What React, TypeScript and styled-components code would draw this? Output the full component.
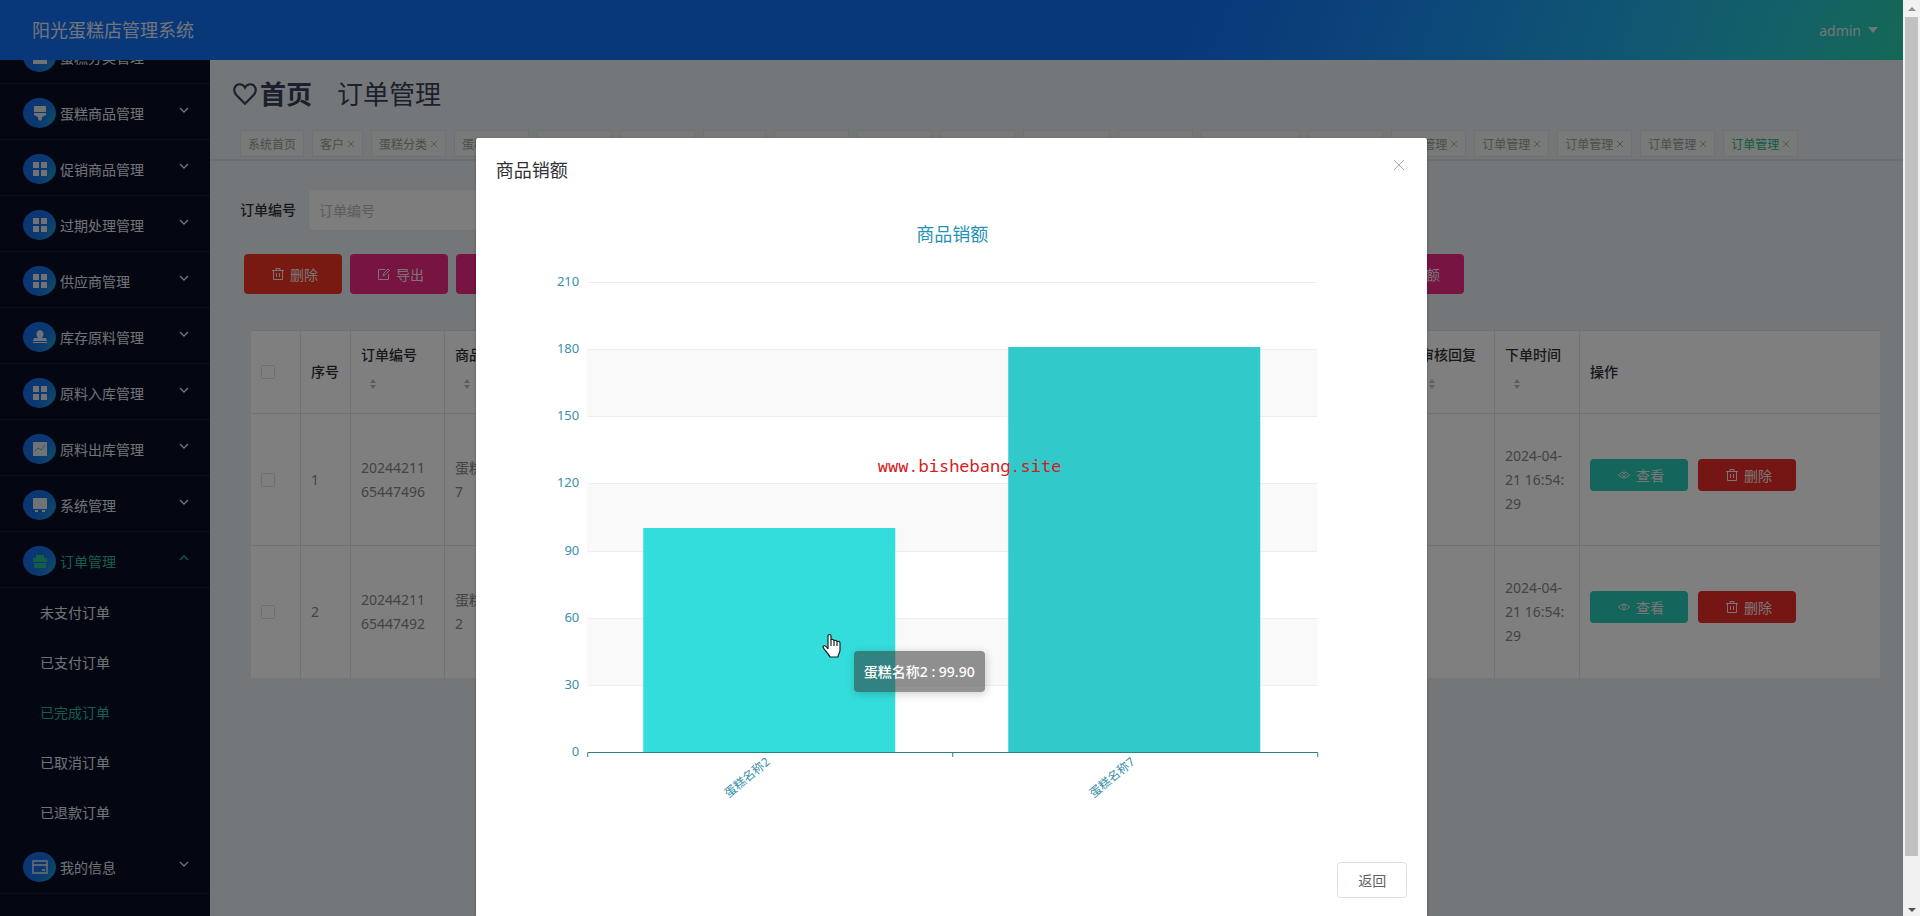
import React from "react";
import styled, { createGlobalStyle, css } from "styled-components";

const GlobalStyle = createGlobalStyle`
  *, *::before, *::after { box-sizing: border-box; }
  body {
    margin: 0;
    font-family: "Noto Sans", "Noto Sans CJK SC", sans-serif;
    font-size: 14px;
    line-height: 24px;
    color: #606266;
  }
  button, input { font-family: inherit; font-size: inherit; }
  ul { list-style: none; margin: 0; padding: 0; }
`;

const Shell = styled.div`
  display: flex;
  height: 100vh;
  overflow: hidden;
`;

const Page = styled.div`
  position: relative;
  display: flex;
  flex-direction: column;
  flex: 1;
  min-width: 0;
  background: #e8eff3;
`;

const Header = styled.header`
  display: flex;
  align-items: center;
  justify-content: space-between;
  flex: none;
  height: 60px;
  padding: 0 24px 0 32px;
  background: linear-gradient(110deg, #1270f4 0%, #1070f4 62%, #1a90f4 75%, #20b0e4 86%, #28c4cc 94%, #2ad0ac 100%);
`;

const Brand = styled.h1`
  margin: 0;
  color: #e4e8f4;
  font-size: 18px;
  font-weight: 400;
`;

const UserButton = styled.button`
  display: flex;
  align-items: center;
  gap: 6px;
  border: 0;
  padding: 0;
  background: none;
  color: #e0ecec;
`;

const Body = styled.div`
  display: flex;
  flex: 1;
  min-height: 0;
`;

const Sidebar = styled.nav`
  flex: none;
  width: 210px;
  overflow: hidden;
  background: #080e24;
`;

const MenuList = styled.ul`
  margin-top: -32px;
`;

const MenuButton = styled.button<{ $active?: boolean }>`
  display: flex;
  align-items: center;
  width: 100%;
  height: 56px;
  padding: 3px 20px 0 23px;
  border: 0;
  border-bottom: 1px solid #1a2034;
  background: none;
  color: ${(p) => (p.$active ? "#2cb896" : "#e0e4ec")};
  text-align: left;
`;

const IconDisc = styled.span`
  display: flex;
  align-items: center;
  justify-content: center;
  width: 33px;
  height: 30px;
  margin-right: 4px;
  border-radius: 50%;
  background: linear-gradient(120deg, #1868f0, #1470e0 55%, #20a0c8);
`;

const MenuLabel = styled.span`
  flex: 1;
`;

const Chevron = styled.svg`
  width: 12px;
  height: 12px;
  margin-bottom: 6px;
`;

const SubLink = styled.a<{ $active?: boolean }>`
  display: flex;
  align-items: center;
  height: 50px;
  padding-left: 40px;
  color: ${(p) => (p.$active ? "#2cb896" : "#e0e4ec")};
  text-decoration: none;
`;

const Main = styled.main`
  flex: 1;
  min-width: 0;
`;

const Crumbs = styled.div`
  display: flex;
  align-items: center;
  height: 67px;
  margin-bottom: 3px;
  padding-left: 22px;
  color: #384058;
  font-size: 26px;
`;

const CrumbHome = styled.strong`
  margin: 0 25px 0 2px;
  font-weight: 700;
`;

const Tabs = styled.div`
  display: flex;
  gap: 8px;
  height: 31px;
  padding: 0 30px;
  overflow: hidden;
  border-bottom: 2px solid #d8dde0;
`;

const Tab = styled.button<{ $active?: boolean }>`
  flex: none;
  display: flex;
  align-items: center;
  height: 27px;
  padding: 0 7px;
  border: 1px solid #dce0e3;
  background: #f0f2f3;
  color: ${(p) => (p.$active ? "#24b890" : "#989ca0")};
  font-size: 12px;
`;

const TabClose = styled.svg`
  width: 11px;
  height: 8px;
  padding-left: 3px;
`;

const SearchRow = styled.div`
  display: flex;
  align-items: center;
  gap: 12px;
  margin: 28px 0 0 30px;
`;

const SearchLabel = styled.label`
  color: #303133;
  font-weight: 500;
`;

const SearchInput = styled.input`
  width: 200px;
  height: 42px;
  padding: 0 10px;
  border: 1px solid #e4e8ea;
  border-radius: 4px;
  background: #fafafa;
  &::placeholder { color: #b4b8c0; }
`;

const Toolbar = styled.div`
  display: flex;
  gap: 8px;
  margin: 23px 34px 36px;
`;

const tones = { red: "#f03424", pink: "#f02884", teal: "#28ccb8", crimson: "#ec2c28" };

const ActionButton = styled.button<{ $tone: keyof typeof tones; $small?: boolean }>`
  flex: none;
  display: flex;
  align-items: center;
  height: ${(p) => (p.$small ? 32 : 40)}px;
  padding: 0 24px;
  border: 0;
  border-radius: 4px;
  background: ${(p) => tones[p.$tone]};
  color: #f4ecec;
  svg { margin: 0 6px 0 4px; }
`;

const Table = styled.table`
  width: calc(100% - 64px);
  margin: 0 23px 0 41px;
  border-spacing: 0;
  border-top: 1px solid #dce2e6;
  table-layout: fixed;
  background: #fff;
`;

const cell = css`
  padding: 0 14px 0 10px;
  border-right: 1px solid #e2e4e8;
  text-align: left;
  word-break: break-all;
  &:last-child { border-right: 0; }
`;

const Th = styled.th`
  ${cell}
  height: 83px;
  border-bottom: 1px solid #e2e4e8;
  color: #303133;
  font-weight: 500;
  white-space: nowrap;
`;

const Td = styled.td`
  ${cell}
  height: 132px;
  border-bottom: 1px solid #e2e4e8;
  color: #84878c;
  tr:last-child > & { border-bottom: 0; }
`;

const Col = styled.col<{ $w?: number }>`
  ${(p) => p.$w && `width: ${p.$w}px;`}
`;

const SortCaret = styled.span`
  display: flex;
  align-items: center;
  justify-content: center;
  width: 24px;
  height: 34px;
`;

const Check = styled.input`
  display: block;
  appearance: none;
  width: 14px;
  height: 14px;
  margin: 0;
  border: 1px solid #dcdfe6;
  border-radius: 2px;
  background: #fff;
`;

const RowActions = styled.div`
  display: flex;
  gap: 10px;
  margin-bottom: 10px;
`;

const Overlay = styled.div`
  position: absolute;
  inset: 0;
  display: flex;
  justify-content: center;
  align-items: flex-start;
  padding-top: calc(15vh + 1px);
  overflow: hidden;
  background: rgba(0, 0, 0, 0.5);
`;

const Dialog = styled.section`
  width: 50%;
  border-radius: 2px;
  background: #fff;
  box-shadow: 0 1px 3px rgba(0, 0, 0, 0.3);
`;

const DialogHead = styled.div`
  display: flex;
  align-items: center;
  justify-content: space-between;
  padding: 20px 20px 10px;
`;

const DialogTitle = styled.h2`
  margin: 0;
  color: #303133;
  font-size: 18px;
  font-weight: 400;
`;

const CloseButton = styled.button`
  display: flex;
  padding: 0 2px;
  margin-top: -10px;
  border: 0;
  background: none;
  color: #a4a7ac;
`;

const ChartBox = styled.div`
  position: relative;
  margin: 30px 20px;
`;

const ChartSvg = styled.svg`
  display: block;
  width: 100%;
  height: 600px;
`;

const Tooltip = styled.div`
  position: absolute;
  left: 358px;
  top: 429px;
  height: 41px;
  padding: 0 10px;
  border-radius: 4px;
  background: rgba(50, 50, 50, 0.53);
  box-shadow: 1px 2px 10px rgba(0, 0, 0, 0.2);
  color: #fff;
  font-weight: 500;
  line-height: 41px;
  white-space: nowrap;
`;

const Pointer = styled.svg`
  position: absolute;
  left: 326px;
  top: 411px;
`;

const Watermark = styled.span`
  position: absolute;
  left: 382px;
  top: 232px;
  color: #d02020;
  font-family: "Noto Sans Mono", "DejaVu Sans Mono", monospace;
  font-size: 17px;
`;

const DialogFoot = styled.div`
  display: flex;
  justify-content: flex-end;
  padding: 10px 20px 20px;
`;

const BackButton = styled.button`
  width: 70px;
  height: 36px;
  border: 1px solid #dcdfe6;
  border-radius: 4px;
  background: #fff;
  color: #606266;
`;

const Scrollbar = styled.div`
  flex: none;
  display: flex;
  flex-direction: column;
  align-items: center;
  justify-content: space-between;
  width: 17px;
  padding: 7px 0 4px;
  background: #f1f1f1;
`;

const ScrollThumb = styled.div`
  flex: 1;
  width: 13px;
  margin: 6px 0 52px;
  background: #c1c1c1;
`;

const glyphs: Record<string, React.ReactNode> = {
  board: <><path d="M4 1h9v3H4zM1 5h14v10H1z" /></>,
  brush: <><path d="M2 1h12v6H2z" /><path d="M2 8h12v2l-4 2v2l-2 2-2-2v-2l-4-2z" /></>,
  grid: <path d="M1 1h6v6H1zM9 1h6v6H9zM1 9h6v6H1zM9 9h6v6H9z" />,
  stamp: <><path d="M8 1a4 4 0 0 1 3 6l-1 2h4l1 3H1l1-3h4L5 7a4 4 0 0 1 3-6z" /><path d="M1 13h14v1H1z" /></>,
  chart: <><path d="M1 1h14v14H1z" /><path d="M3 10l3-3 3 2 4-5" fill="none" stroke="#68a8c0" /></>,
  monitor: <><path d="M1 1h14v11H1z" /><path d="M3 13h3v2H3zM10 13h3v2h-3z" /></>,
  bag: <path d="M4 2h8v3H4zM1 5h14v4H1zM2 10h12v5H2z" />,
  card: <path d="M1 2h14v12H1zM1 6h14M10 11h3" fill="none" stroke="currentColor" strokeWidth="1.4" />,
};

function Glyph({ name }: { name: string }) {
  return <svg width="16" height="16" viewBox="0 0 16 16" fill="currentColor">{glyphs[name]}</svg>;
}

function Line({ d, size = 12 }: { d: string; size?: number }) {
  return (
    <svg width={size} height={size} viewBox="0 0 12 12" fill="none" stroke="currentColor">
      <path d={d} />
    </svg>
  );
}

const TRASH = "M0 2.5h12M4 2V.5h4V2M1.5 2.5v9h9v-9M4.5 5v4M7.5 5v4";
const EXPORT = "M7 1.5H.5v10h10V6M5 8l1-3 4-4 1.5 1.5-4 4z";
const EYE = "M.5 6Q6 0 11.5 6Q6 12 .5 6zM6 4.5a1.5 1.5 0 1 0 .01 0";
const DOC = "M1.5 .5h9v11h-9zM4 4h4M4 7h4";
const CLOSE = "M1 1l10 10M11 1L1 11";

const menu = [
  ["蛋糕分类管理", "board"], ["蛋糕商品管理", "brush"], ["促销商品管理", "grid"],
  ["过期处理管理", "grid"], ["供应商管理", "grid"], ["库存原料管理", "stamp"],
  ["原料入库管理", "grid"], ["原料出库管理", "chart"], ["系统管理", "monitor"],
  ["订单管理", "bag"], ["我的信息", "card"],
];
const orderLinks = ["未支付订单", "已支付订单", "已完成订单", "已取消订单", "已退款订单"];
const tabs = [
  "系统首页", "客户", "蛋糕分类", "蛋糕商品", "促销商品", "过期处理", "供应商", "库存原料",
  "原料入库", "原料出库", "轮播图管理", "公告信息", "客户订单管理", "订单管理", "订单管理",
  "订单管理", "订单管理", "订单管理", "订单管理",
];
const tools = ["删除", "导出", "打印", "日期", "销量统计", "销额统计", "类型统计", "订单统计", "商品销量", "商品销额"];
const columns: [string, number?][] = [
  ["订单编号", 94], ["商品名称", 85], ["商品类型"], ["购买数量"], ["商品价格"], ["订单总价"],
  ["支付类型"], ["订单状态"], ["收货地址"], ["联系电话"], ["客户姓名"], ["是否审核"],
  ["审核回复", 85], ["下单时间", 85],
];
const orders = [
  { no: "2024421165447496", name: "蛋糕名称7" },
  { no: "2024421165447492", name: "蛋糕名称2" },
];

function SideMenu() {
  return (
    <Sidebar aria-label="主菜单">
      <MenuList>
        {menu.map(([label, icon]) => {
          const open = label === "订单管理";
          return (
            <li key={label}>
              <MenuButton type="button" $active={open} aria-expanded={open}>
                <IconDisc><Glyph name={icon} /></IconDisc>
                <MenuLabel>{label}</MenuLabel>
                <Chevron viewBox="0 0 12 12" fill="none" stroke="currentColor" strokeWidth="1.3">
                  <path d={open ? "M2 8l4-4 4 4" : "M2 4l4 4 4-4"} />
                </Chevron>
              </MenuButton>
              {open && (
                <ul>
                  {orderLinks.map((l) => (
                    <li key={l}><SubLink href="#" $active={l === "已完成订单"}>{l}</SubLink></li>
                  ))}
                </ul>
              )}
            </li>
          );
        })}
      </MenuList>
    </Sidebar>
  );
}

function OrderTable() {
  return (
    <Table>
      <colgroup>
        <Col $w={50} /><Col $w={50} />
        {columns.map(([c, w]) => <Col key={c} $w={w} />)}
        <Col $w={300} />
      </colgroup>
      <thead>
        <tr>
          <Th><Check type="checkbox" aria-label="全选" /></Th>
          <Th>序号</Th>
          {columns.map(([c]) => (
            <Th key={c}>
              {c}
              <SortCaret>
                <svg width="8" height="12" viewBox="0 0 8 12" fill="#b8bcc4">
                  <path d="M4 1l3 4H1zM4 11L1 7h6z" />
                </svg>
              </SortCaret>
            </Th>
          ))}
          <Th>操作</Th>
        </tr>
      </thead>
      <tbody>
        {orders.map((o, i) => (
          <tr key={o.no}>
            <Td><Check type="checkbox" aria-label={`选择 ${o.no}`} /></Td>
            <Td>{i + 1}</Td>
            {columns.map(([c]) => (
              <Td key={c}>
                {c === "订单编号" ? o.no : c === "商品名称" ? o.name : c === "下单时间" ? "2024-04-21 16:54:29" : ""}
              </Td>
            ))}
            <Td>
              <RowActions>
                <ActionButton type="button" $tone="teal" $small><Line d={EYE} />查看</ActionButton>
                <ActionButton type="button" $tone="crimson" $small><Line d={TRASH} />删除</ActionButton>
              </RowActions>
            </Td>
          </tr>
        ))}
      </tbody>
    </Table>
  );
}

const PLOT = { left: 91, right: 821, top: 60, bottom: 530, max: 210 };
const sales = [
  { name: "蛋糕名称2", value: 99.9, fill: "#33dddc" },
  { name: "蛋糕名称7", value: 181, fill: "#32c9ca" },
];
const yOf = (v: number) => Math.round(PLOT.bottom - (v / PLOT.max) * (PLOT.bottom - PLOT.top));

function SalesChart() {
  const band = (PLOT.right - PLOT.left) / sales.length;
  const ticks = [0, 30, 60, 90, 120, 150, 180, 210];
  return (
    <ChartSvg viewBox="0 0 911 600" role="img" aria-label="商品销额" fontSize="13" fill="#3a90ab">
      <text x="456" y="19" fontSize="18" textAnchor="middle" fill="#2592b3">商品销额</text>
      {[60, 120, 180].map((t) => (
        <rect key={t} x={PLOT.left} y={yOf(t)} width={PLOT.right - PLOT.left} height={yOf(t - 30) - yOf(t)} fill="#f9f9f9" />
      ))}
      {ticks.map((t) => (
        <g key={t}>
          {t > 0 && <path d={`M${PLOT.left} ${yOf(t) + 0.5}H${PLOT.right}`} stroke="#eeeeee" />}
          <text x="83" y={yOf(t) + 4} textAnchor="end">{t}</text>
        </g>
      ))}
      {sales.map((s, i) => (
        <g key={s.name}>
          <rect x={PLOT.left + band * i + 56} y={yOf(s.value)} width="252" height={PLOT.bottom - yOf(s.value)} fill={s.fill} />
          <text
            fontSize="12"
            textAnchor="end"
            transform={`translate(${PLOT.left + band * (i + 0.5) + 1} ${PLOT.bottom + 11}) rotate(-40)`}
          >
            {s.name}
          </text>
        </g>
      ))}
      <path
        d={`M${PLOT.left + 0.5} 535V530.5H${PLOT.right + 0.5}V535M${PLOT.left + band + 0.5} 530V535`}
        fill="none"
        stroke="#2f8080"
      />
    </ChartSvg>
  );
}

export default function App() {
  return (
    <Shell>
      <GlobalStyle />
      <Page>
        <Header>
          <Brand>阳光蛋糕店管理系统</Brand>
          <UserButton type="button">
            admin
            <svg width="12" height="8" viewBox="0 0 12 8" fill="currentColor"><path d="M1 1h10L6 7z" /></svg>
          </UserButton>
        </Header>
        <Body>
          <SideMenu />
          <Main>
            <Crumbs>
              <svg width="26" height="26" viewBox="0 0 24 24" fill="none" stroke="currentColor" strokeWidth="2">
                <path d="M12 21L4 13C0 8 3 3 7 3c2 0 4 1 5 3 1-2 3-3 5-3 4 0 7 5 3 10z" />
              </svg>
              <CrumbHome>首页</CrumbHome>
              <span>订单管理</span>
            </Crumbs>
            <Tabs>
              {tabs.map((t, i) => (
                <Tab key={i} type="button" $active={i === tabs.length - 1}>
                  {t}
                  {i > 0 && (
                    <TabClose viewBox="0 0 8 8" fill="none" stroke="#a8acb0"><path d="M1 1l6 6M7 1L1 7" /></TabClose>
                  )}
                </Tab>
              ))}
            </Tabs>
            <SearchRow>
              <SearchLabel htmlFor="order-no">订单编号</SearchLabel>
              <SearchInput id="order-no" placeholder="订单编号" />
            </SearchRow>
            <Toolbar>
              {tools.map((t, i) => (
                <ActionButton key={t} type="button" $tone={i === 0 ? "red" : "pink"}>
                  <Line d={i === 0 ? TRASH : i === 1 ? EXPORT : DOC} />
                  {t}
                </ActionButton>
              ))}
            </Toolbar>
            <OrderTable />
          </Main>
        </Body>
        <Overlay>
          <Dialog role="dialog" aria-labelledby="dialog-title">
            <DialogHead>
              <DialogTitle id="dialog-title">商品销额</DialogTitle>
              <CloseButton type="button" aria-label="关闭"><Line d={CLOSE} /></CloseButton>
            </DialogHead>
            <ChartBox>
              <SalesChart />
              <Tooltip role="tooltip">蛋糕名称2 : 99.90</Tooltip>
              <Pointer width="20" height="25" viewBox="0 0 20 25" fill="#fff" stroke="#182020" strokeWidth="1.2">
                <path d="M6 16V3c0-2 3-2 3 0v7V7c0-1 3-1 3 1 0-1 3-1 3 1 0-1 3-1 3 1v7c0 3-2 4-2 7H8c-1-3-6-7-7-10 0-2 3-2 5 2zM9 8v5M12 8v5M15 9v4" />
              </Pointer>
              <Watermark>www.bishebang.site</Watermark>
            </ChartBox>
            <DialogFoot><BackButton type="button">返回</BackButton></DialogFoot>
          </Dialog>
        </Overlay>
      </Page>
      <Scrollbar aria-hidden="true">
        <svg width="8" height="4" viewBox="0 0 8 4" fill="#909090"><path d="M4 0l4 4H0z" /></svg>
        <ScrollThumb />
        <svg width="8" height="4" viewBox="0 0 8 4" fill="#505050"><path d="M4 4L0 0h8z" /></svg>
      </Scrollbar>
    </Shell>
  );
}
